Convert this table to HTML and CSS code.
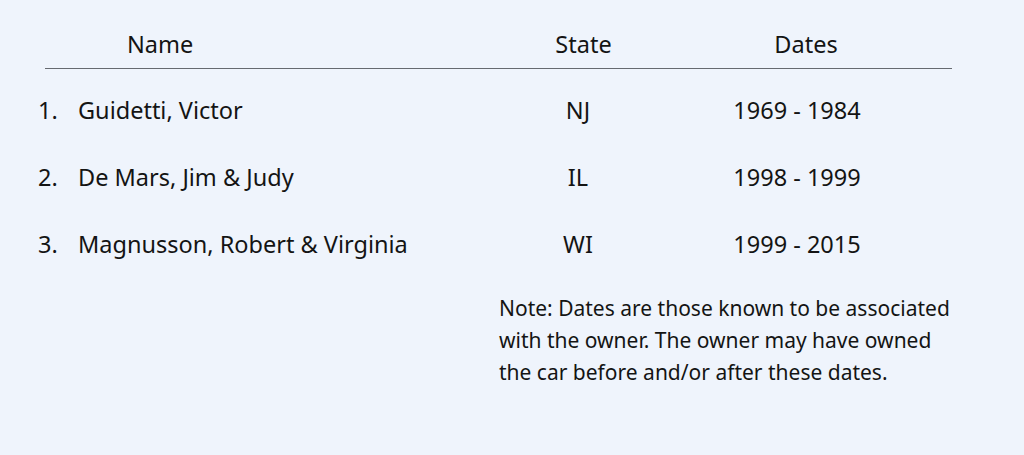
FILE: index.html
```html
<!DOCTYPE html>
<html lang="en">
<head>
<meta charset="utf-8">
<title>Owners</title>
<link rel="stylesheet" href="styles.css">
</head>
<body>
<main class="owners">
  <div class="head">
    <span class="num"></span>
    <span class="h-name">Name</span>
    <span class="h-state">State</span>
    <span class="h-dates">Dates</span>
  </div>
  <div class="rule"></div>
  <ol class="rows">
    <li class="row"><span class="num">1.</span><span class="name">Guidetti, Victor</span><span class="state">NJ</span><span class="dates">1969 - 1984</span></li>
    <li class="row"><span class="num">2.</span><span class="name">De Mars, Jim &amp; Judy</span><span class="state">IL</span><span class="dates">1998 - 1999</span></li>
    <li class="row"><span class="num">3.</span><span class="name">Magnusson, Robert &amp; Virginia</span><span class="state">WI</span><span class="dates">1999 - 2015</span></li>
  </ol>
  <p class="note">Note: Dates are those known to be associated with the owner. The owner may have owned the car before and/or after these dates.</p>
</main>
</body>
</html>
```

FILE: styles.css
```css
html, body {
  margin: 0;
  padding: 0;
  background: #eff4fc;
}
body {
  font-family: "Noto Sans", "Open Sans", sans-serif;
  font-size: 23.5px;
  color: #141414;
}
.owners {
  padding: 29px 0 0 0;
}
.head,
.row {
  display: grid;
  grid-template-columns: 40px 460px 80px 358px;
  padding-left: 38px;
}
.head {
  line-height: 30px;
}
.h-name {
  padding-left: 49px;
}
.h-state {
  text-align: center;
  padding-left: 11px;
}
.h-dates {
  text-align: center;
  padding-left: 18px;
}
.rule {
  margin: 9px 72px 0 45px;
  height: 1px;
  background: #666a70;
}
.rows {
  list-style: none;
  margin: 8px 0 0 0;
  padding: 0;
}
.row {
  line-height: 67px;
}
.state, .dates {
  text-align: center;
}
.note {
  margin: 14px 0 0 499px;
  width: 465px;
  font-size: 21px;
  line-height: 32px;
}
```
